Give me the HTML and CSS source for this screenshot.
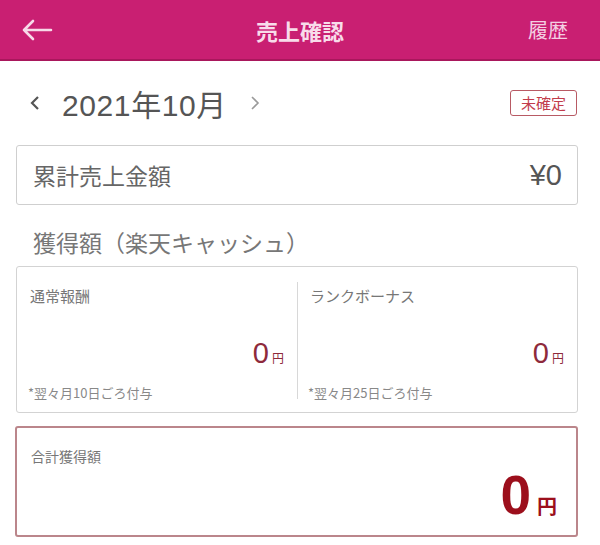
FILE: index.html
```html
<!DOCTYPE html>
<html lang="ja">
<head>
<meta charset="utf-8">
<title>売上確認</title>
<link rel="stylesheet" href="styles.css">
</head>
<body>
<header class="appbar">
  <span class="back">
    <svg width="32" height="22" viewBox="0 0 32 22"><path d="M30 11H3M12 2L3 11l9 9" fill="none" stroke="#f7d9e8" stroke-width="2.6" stroke-linecap="round" stroke-linejoin="round"/></svg>
  </span>
  <h1 class="title">売上確認</h1>
  <span class="history">履歴</span>
</header>
<main class="content">
  <div class="month-row">
    <div class="month-nav">
      <svg class="chev" width="12" height="16" viewBox="0 0 12 16"><path d="M9 2L3 8l6 6" fill="none" stroke="#555" stroke-width="2.2"/></svg>
      <span class="month">2021年10月</span>
      <svg class="chev next" width="12" height="16" viewBox="0 0 12 16"><path d="M3 2l6 6-6 6" fill="none" stroke="#9a9a9a" stroke-width="1.6"/></svg>
    </div>
    <span class="badge">未確定</span>
  </div>
  <div class="sales-box">
    <span class="sales-label">累計売上金額</span>
    <span class="sales-value">¥0</span>
  </div>
  <h2 class="section-title">獲得額（楽天キャッシュ）</h2>
  <div class="cards">
    <div class="card-col">
      <div class="col-label">通常報酬</div>
      <div class="col-amount"><span class="num">0</span><span class="yen">円</span></div>
      <div class="col-note">*翌々月10日ごろ付与</div>
    </div>
    <div class="divider"></div>
    <div class="card-col">
      <div class="col-label">ランクボーナス</div>
      <div class="col-amount"><span class="num">0</span><span class="yen">円</span></div>
      <div class="col-note">*翌々月25日ごろ付与</div>
    </div>
  </div>
  <div class="total-box">
    <div class="total-label">合計獲得額</div>
    <div class="total-amount"><span class="tnum">0</span><span class="tyen">円</span></div>
  </div>
</main>
</body>
</html>
```
FILE: styles.css
```css
* { box-sizing: border-box; margin: 0; padding: 0; }
html, body { background: #fff; }
body {
  width: 600px;
  height: 545px;
  overflow: hidden;
  font-family: "Noto Sans CJK JP", "Noto Sans", sans-serif;
  color: #666;
}
.appbar {
  height: 61px;
  background: #c91f72;
  border-bottom: 2px solid #a9175c;
  display: flex;
  align-items: center;
  justify-content: space-between;
  padding: 0 32px 0 21px;
  position: relative;
}
.back { display: flex; width: 32px; height: 22px; }
.title {
  position: absolute;
  left: 0; right: 0;
  text-align: center;
  font-size: 22px;
  font-weight: bold;
  color: #f8dcea;
  pointer-events: none;
}
.history { font-size: 20px; color: #f4cfe2; }
.content { padding: 0 22px 0 16px; }
.month-row {
  height: 84px;
  display: flex;
  align-items: center;
  justify-content: space-between;
  padding: 0 1px 0 13px;
}
.month-nav { display: flex; align-items: center; }
.chev { display: block; }
.month {
  font-family: "Liberation Sans", "Noto Sans CJK JP", sans-serif;
  font-size: 30px;
  color: #555;
  margin: 0 22px 0 21px;
  letter-spacing: 0.6px;
}
.badge {
  font-size: 15px;
  color: #c23c4b;
  border: 1.5px solid #b85a64;
  border-radius: 3px;
  padding: 2px 10px;
  line-height: 20px;
}
.sales-box {
  height: 60px;
  border: 1px solid #cfcfcf;
  border-radius: 3px;
  display: flex;
  align-items: center;
  justify-content: space-between;
  padding: 0 15px 0 16px;
}
.sales-label { font-size: 23px; color: #666; }
.sales-value {
  font-family: "Liberation Sans", "Noto Sans CJK JP", sans-serif;
  font-size: 29px;
  color: #555;
}
.section-title {
  font-size: 23px;
  font-weight: normal;
  color: #777;
  height: 61px;
  padding: 24px 0 0 17px;
  line-height: 26px;
}
.cards {
  height: 147px;
  border: 1px solid #d3d3d3;
  border-radius: 3px;
  display: flex;
  padding: 0 0 0 1px;
}
.card-col {
  flex: 1;
  display: flex;
  flex-direction: column;
  padding: 21px 13px 0 12px;
}
.divider {
  width: 1px;
  background: #d8d8d8;
  margin: 15px 0 13px;
}
.col-label { font-size: 15px; line-height: 16px; color: #777; }
.col-amount {
  margin-top: 34px;
  text-align: right;
  line-height: 30px;
  color: #8e2a3b;
}
.num {
  font-family: "Liberation Sans", sans-serif;
  font-size: 29px;
}
.yen { font-size: 12px; margin-left: 3px; }
.col-note { font-size: 13px; line-height: 14px; margin-top: 13px; color: #888; margin-left: -2px; }
.total-box {
  margin-top: 13px;
  margin-left: -1px;
  height: 111px;
  border: 2px solid #bb868b;
  border-radius: 3px;
  padding: 20px 19px 0 14px;
}
.total-label { font-size: 14px; line-height: 16px; color: #777; }
.total-amount {
  margin-top: 4px;
  text-align: right;
  line-height: 54px;
  color: #9c0f1c;
  font-weight: bold;
}
.tnum {
  font-family: "Liberation Sans", sans-serif;
  font-size: 55px;
}
.tyen { font-size: 20px; margin-left: 6px; }
```
